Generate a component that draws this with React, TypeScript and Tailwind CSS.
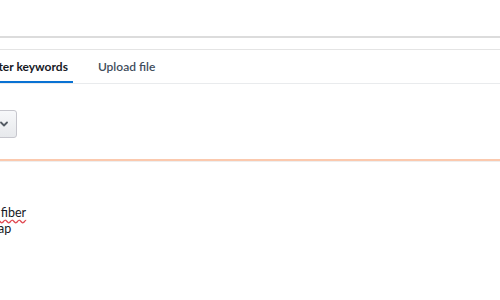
import React from "react";

const App: React.FC = () => {
  return (
    <div
      className="w-[500px] h-[300px] overflow-hidden bg-white text-[#16191f]"
      style={{ fontFamily: 'Lato, "Open Sans", sans-serif' }}
    >
      <div className="h-[36px]" />
      <div className="h-[2px] bg-[#dcdcdc]" />
      <div className="h-[11px]" />
      <div className="h-px bg-[#e4e4e4]" />

      {/* tabs */}
      <div className="flex h-[34px] items-stretch border-b border-[#e9ebed] text-[12px] leading-none">
        <div className="relative -ml-[15px] flex items-center pr-[5px] font-bold">
          Enter keywords
          <span className="absolute bottom-0 left-0 right-0 h-[2px] bg-[#0972d3]" />
        </div>
        <div className="ml-[25px] flex items-center font-semibold text-[#414d5c]">
          Upload file
        </div>
      </div>

      {/* select */}
      <div className="mt-[26px] -ml-[18px] flex">
        <button className="flex h-[28px] w-[35px] items-center justify-end rounded-[3px] border border-[#c6c6cd] bg-gradient-to-b from-[#f7f8fa] to-[#e7e9ec] pr-[7px]">
          <svg width="10" height="10" viewBox="0 0 10 10">
            <path
              d="M2 3.5 L5 6.5 L8 3.5"
              fill="none"
              stroke="#545b64"
              strokeWidth="1.8"
              strokeLinecap="round"
              strokeLinejoin="round"
            />
          </svg>
        </button>
      </div>

      <div className="mt-[21px] h-[2px] bg-[#fbc9ae]" />
      <div className="h-px bg-[#eeeeee]" />

      {/* list */}
      <div className="mt-[44px] -ml-[42px] flex flex-col gap-[3px] text-[12.5px] leading-[13px]">
        <div>
          <span className="underline decoration-wavy decoration-[#e0464f] underline-offset-[2px]">
            Optical fiber
          </span>
        </div>
        <div>Heat map</div>
      </div>
    </div>
  );
};

export default App;
